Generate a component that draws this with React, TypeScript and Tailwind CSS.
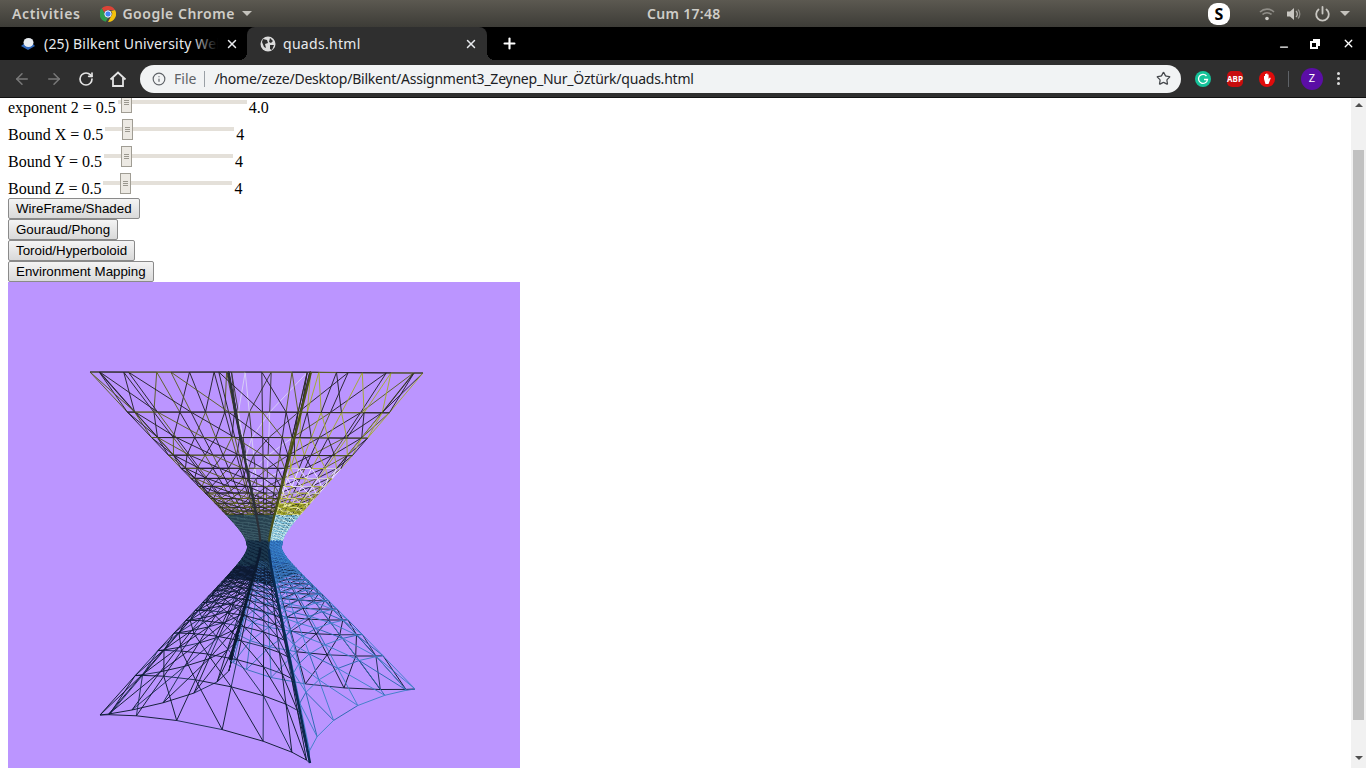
import React from "react";
import { ArrowLeft, ArrowRight, RotateCw, Info, Star, X, Plus, Minus } from "lucide-react";

// corners of the hyperboloid on screen, relative to the canvas corner
const corners = [
    { top: [415, 91], bot: [407, 407] },
    { top: [303, 90], bot: [302, 481] },
    { top: [82, 90], bot: [92, 433] },
    { top: [220, 90], bot: [222, 378] },
];

const cornerAt = (i: number, t: number) => {
    const c = corners[i];
    const o = corners[(i + 2) % 4];
    const T = t >= 0 ? c.top : c.bot;
    const O = t >= 0 ? o.top : o.bot;
    const cx = (T[0] + O[0]) / 2;
    const xw = 256.5;
    const a = 0.087;
    const abs = Math.abs(t);
    const r = Math.pow(abs * abs * (1 - a * a) + a * a, 0.46);
    return [xw + abs * (cx - xw) + r * (T[0] - cx), 263 + abs * (T[1] - 263)];
};

const meshPoint = (u: number, t: number) => {
    const p = [0, 1, 2, 3].map((i) => cornerAt(i, t));
    const cos = Math.cos(u);
    const sin = Math.sin(u);
    const cu = Math.sign(cos) * Math.pow(Math.abs(cos), 3);
    const su = Math.sign(sin) * Math.pow(Math.abs(sin), 3);
    const w = Math.abs(cu) / (Math.abs(cu) + Math.abs(su));
    return [0, 1].map((k) => {
        const ca = (p[0][k] + p[2][k]) / 2;
        const cb = (p[1][k] + p[3][k]) / 2;
        return w * ca + (1 - w) * cb + (cu * (p[0][k] - p[2][k])) / 2 + (su * (p[1][k] - p[3][k])) / 2;
    });
};

// q = quadrant, f = 0..1 inside it, ring = horizontal line
const wireColor = (q: number, f: number, t: number, seed: number, ring: boolean) => {
    const bright = q === 0;
    const pale = q === 3 && f < 0.5;
    if (t < -0.12) {
        if (bright) return seed % 3 === 0 ? "#2a68b0" : "#3f7fc8";
        if (pale) return "#3a74b8";
        return seed % 4 === 0 ? "#1c2f55" : "#0e1a33";
    }
    if (t < 0.03) {
        if (bright) return seed % 2 === 0 ? "#2a68ba" : "#3a84cf";
        return seed % 2 === 0 ? "#0e2238" : "#1d3a50";
    }
    if (t < 0.17) {
        if (bright) return seed % 3 === 0 ? "#d4f4f6" : "#86cbe6";
        return seed % 3 === 0 ? "#3f5f6a" : "#27404f";
    }
    if (t < 0.29) {
        if (bright) return seed % 3 === 0 ? "#e8e8a0" : "#a9ad2c";
        return seed % 2 === 0 ? "#5d5f22" : "#2c2d24";
    }
    if (t < 0.46) {
        if (bright) return seed % 3 === 0 ? "#bfc04a" : "#efeaff";
        if (pale) return seed % 2 === 0 ? "#d9d4fb" : "#4c4a58";
        return seed % 3 === 0 ? "#55581f" : "#211f2a";
    }
    if (ring) return seed % 3 === 0 ? "#5a5f22" : "#2b2a26";
    if (bright) return seed % 3 === 0 ? "#26242c" : "#a3ad2c";
    if (pale) return seed % 2 === 0 ? "#d8d0f6" : "#3a3a38";
    return seed % 3 === 0 ? "#5a5f22" : "#25232c";
};

const buildMesh = () => {
    const rings = 56;
    const longs = 32;
    const fills = new Map<string, string>();
    const groups = new Map<string, string>();
    const vMax = 1.4;
    const tOf = (i: number) => Math.tan(-vMax + (i * 2 * vMax) / rings) / Math.tan(vMax);
    const uOf = (j: number) => (j * Math.PI * 2) / longs;
    const txt = (p: number[]) => p[0].toFixed(1) + " " + p[1].toFixed(1);
    const add = (layer: number, color: string, a: number[], b: number[]) => {
        const key = layer + "|" + color;
        groups.set(key, (groups.get(key) || "") + "M" + txt(a) + "L" + txt(b));
    };
    for (let i = 0; i <= rings; i++) {
        for (let j = 0; j < longs; j++) {
            const q = Math.floor(j / 8);
            const f = (j % 8) / 8;
            const layer = q >= 2 ? 0 : 1;
            const t = tOf(i);
            const p = meshPoint(uOf(j), t);
            const p2 = meshPoint(uOf(j + 1), t);
            const seed = i * 7 + j * 13;
            add(layer, wireColor(q, f, t, seed, true), p, p2);
            if (i < rings) {
                const t2 = tOf(i + 1);
                const mid = (t + t2) / 2;
                const b = meshPoint(uOf(j), t2);
                const b2 = meshPoint(uOf(j + 1), t2);
                add(layer, wireColor(q, f, mid, seed + 1, false), p, b);
                add(layer, wireColor(q, f, mid, seed + 2, false), p, b2);
                if (mid > -0.2 && mid < (q === 0 ? 0.24 : 0.18)) {
                    const key = layer + "|" + wireColor(q, f, mid, seed + 2, false);
                    fills.set(key, (fills.get(key) || "") + "M" + txt(p) + "L" + txt(p2) + "L" + txt(b2) + "L" + txt(b) + "Z");
                }
            }
        }
    }
    const sorted = (m: Map<string, string>) =>
        Array.from(m.entries())
            .sort((a, b) => a[0].charCodeAt(0) - b[0].charCodeAt(0))
            .map(([key, d]) => ({ color: key.split("|")[1], d }));
    return { fills: sorted(fills), wires: sorted(groups) };
};

const mesh = buildMesh();

const seamPath = (j: number, from: number, to: number) => {
    const pts: string[] = [];
    for (let s = 0; s <= 60; s++) {
        const p = meshPoint((j * Math.PI) / 2, from + ((to - from) * s) / 60);
        pts.push(p[0].toFixed(1) + " " + p[1].toFixed(1));
    }
    return "M" + pts.join("L");
};

const Hyperboloid = () => (
    <svg viewBox="0 0 512 512" className="w-[512px] h-[512px] block" fill="none">
        {mesh.fills.map((m, i) => (
            <path key={i} d={m.d} fill={m.color} />
        ))}
        {mesh.wires.map((m, i) => (
            <path key={i} d={m.d} stroke={m.color} strokeWidth="0.95" />
        ))}
        <path d={seamPath(3, 0.02, 1)} stroke="#2b3038" strokeWidth="2.2" />
        <path d={seamPath(3, -0.02, -1)} stroke="#0c1a30" strokeWidth="2.6" />
        <path d={seamPath(1, 0.02, 1)} stroke="#4a5018" strokeWidth="2.2" />
        <path d={seamPath(1, -0.02, -1)} stroke="#0a2a50" strokeWidth="2.4" />
    </svg>
);

const ChromeLogo = () => (
    <svg width="16" height="16" viewBox="0 0 16 16">
        <path d="M8 0a8 8 0 0 1 7 4H8a4 4 0 0 0-3.700 2.400L1.700 2.300A8 8 0 0 1 8 0z" fill="#db4437" />
        <path d="M1.700 2.300l3 5.200A3.400 3.400 0 0 0 8 12l-2.200 3.700A8 8 0 0 1 1.700 2.300z" fill="#2e9c4e" />
        <path d="M15 4a8 8 0 0 1-7 12l3.200-6A3.600 3.600 0 0 0 11 5z" fill="#f4c20d" />
        <circle cx="8" cy="8" r="3.200" fill="#4285f4" stroke="#fff" strokeWidth="1" />
    </svg>
);

const Slider = ({ offset }: { offset: number }) => (
    <div className="relative w-[129px] h-[21px] shrink-0 mx-[2px]">
        <div className="absolute left-0 right-0 top-[8px] h-[4px] bg-[#e4e0d9]" />
        <div
            className="absolute top-0 w-[11px] h-[21px] bg-[#ece9e3] border border-[#a09d94] flex flex-col items-center justify-center gap-[1px]"
            style={{ left: offset }}>
            <span className="w-[5px] h-px bg-[#9a978e]" />
            <span className="w-[5px] h-px bg-[#9a978e]" />
            <span className="w-[5px] h-px bg-[#9a978e]" />
        </div>
    </div>
);

const SliderRow = ({ label, value, height, offset }: { label: string; value: string; height: string; offset: number }) => (
    <div className={"flex items-start text-black " + height}>
        <span className="pt-[7px] leading-[18px] whitespace-nowrap">{label}</span>
        <Slider offset={offset} />
        <span className="pt-[7px] leading-[18px]">{value}</span>
    </div>
);

const PageButton = ({ label, width }: { label: string; width: string }) => (
    <button
        className={
            "block h-[21px] px-[7px] text-left text-[13.33px] leading-none text-black whitespace-nowrap rounded-[2px] border border-[#8a8a8a] bg-gradient-to-b from-[#f4f4f4] to-[#d9d9d9] font-['Liberation_Sans',sans-serif] " +
            width
        }>
        {label}
    </button>
);

const App: React.FC = () => {
    return (
        <div className="w-[1366px] h-[768px] flex flex-col overflow-hidden bg-white font-['Noto_Sans',sans-serif]">
            {/* ubuntu top bar */}
            <div className="h-[27px] shrink-0 flex items-center pl-[12px] pr-[16px] bg-gradient-to-b from-[#5c5951] to-[#3d3c37] text-[14px] font-semibold text-[#cfcdc8] relative">
                <span className="tracking-[0.6px]">Activities</span>
                <div className="flex items-center ml-[20px] gap-[6px]">
                    <ChromeLogo />
                    <span className="tracking-[0.5px]">Google Chrome</span>
                    <span className="w-0 h-0 ml-[1px] border-x-[5px] border-x-transparent border-t-[5px] border-t-[#c4c2bc]" />
                </div>
                <span className="absolute left-[647px] tracking-[0.3px]">Cum 17:48</span>
                <div className="ml-auto flex items-center">
                    <div className="w-[22px] h-[22px] rounded-[9px] bg-white text-black text-[16px] font-bold flex items-center justify-center mr-[29px]">
                        S
                    </div>
                    <svg width="16" height="14" viewBox="0 0 16 14" className="mr-[12px]" fill="none" stroke="#8f8d87" strokeWidth="1.600">
                        <path d="M1 5a10 10 0 0 1 14 0" />
                        <path d="M3.500 7.500a6.500 6.500 0 0 1 9 0" />
                        <circle cx="8" cy="11.500" r="1.800" fill="#d0cec9" stroke="none" />
                    </svg>
                    <svg width="16" height="14" viewBox="0 0 16 14" className="mr-[12px]" fill="none">
                        <path d="M0 4.500h3L7 1v12L3 9.500H0z" fill="#c9c7c2" />
                        <path d="M9 4a4 4 0 0 1 0 6" stroke="#b5b3ae" strokeWidth="1.300" />
                        <path d="M11 2.500a6.500 6.500 0 0 1 0 9" stroke="#8f8d87" strokeWidth="1.300" />
                    </svg>
                    <svg width="15" height="16" viewBox="0 0 15 16" className="mr-[10px]" fill="none" stroke="#c9c7c2" strokeWidth="1.800" strokeLinecap="round">
                        <path d="M7.500 1v6.500" />
                        <path d="M3.500 3.500a6.300 6.300 0 1 0 8 0" />
                    </svg>
                    <span className="w-0 h-0 border-x-[5px] border-x-transparent border-t-[5px] border-t-[#c4c2bc]" />
                </div>
            </div>

            {/* tab strip */}
            <div className="h-[33px] shrink-0 bg-black flex items-stretch text-[14px] text-[#e8eaed]">
                <div className="w-[247px] flex items-center pl-[20px] relative shrink-0">
                    <svg width="16" height="14" viewBox="0 0 16 14" className="shrink-0">
                        <path d="M1 9l4-3h7l3 3-7 4z" fill="#2f66b8" />
                        <ellipse cx="8.500" cy="5.500" rx="5" ry="4.500" fill="#e9edf2" />
                    </svg>
                    <span className="ml-[8px] whitespace-nowrap w-[174px] overflow-hidden tracking-[0.2px]">(25) Bilkent University Web</span>
                    <div className="absolute left-[192px] w-[26px] h-full bg-gradient-to-r from-transparent to-black" />
                    <X size={14} className="absolute left-[225px] text-[#e8eaed]" strokeWidth={2.5} />
                </div>
                <div className="w-[240px] shrink-0 bg-[#2f2f2f] rounded-t-[8px] flex items-center pl-[13px] relative">
                    <span className="absolute -left-[8px] bottom-0 w-[8px] h-[8px] bg-[radial-gradient(circle_at_0_0,#000_8px,#2f2f2f_8px)]" />
                    <span className="absolute -right-[8px] bottom-0 w-[8px] h-[8px] bg-[radial-gradient(circle_at_100%_0,#000_8px,#2f2f2f_8px)]" />
                    <svg width="16" height="16" viewBox="0 0 16 16">
                        <circle cx="8" cy="8" r="7.500" fill="#dcdcdc" />
                        <path d="M3 3l4 1 1 3-3 1 1 4-2-1-2-5zM10 2l3 3-2 2-2-1zM10 9l4 0-2 5-2-1z" fill="#2f2f2f" />
                    </svg>
                    <span className="ml-[7px] tracking-[0.3px]">quads.html</span>
                    <X size={14} className="absolute left-[217px] text-[#e8eaed]" strokeWidth={2.5} />
                </div>
                <div className="flex items-center ml-[14px]">
                    <Plus size={17} className="text-white" strokeWidth={3} />
                </div>
                <div className="ml-auto flex items-center pr-[11px] text-white">
                    <Minus size={12} strokeWidth={2.5} className="mt-[6px] mr-[20px]" />
                    <svg width="10" height="10" viewBox="0 0 10 10" className="mr-[22px]" fill="none" stroke="#fff" strokeWidth="2">
                        <path d="M3 1h6v6" />
                        <rect x="1" y="3" width="6" height="6" />
                    </svg>
                    <X size={13} strokeWidth={2.5} />
                </div>
            </div>

            {/* toolbar */}
            <div className="h-[38px] shrink-0 bg-[#2f2f2f] border-b border-[#111] flex items-center">
                <ArrowLeft size={18} className="ml-[13px] text-[#797979]" strokeWidth={2} />
                <ArrowRight size={18} className="ml-[14px] text-[#797979]" strokeWidth={2} />
                <RotateCw size={16} className="ml-[15px] text-[#e4e4e4]" strokeWidth={2.5} />
                <svg width="18" height="18" viewBox="0 0 18 18" className="ml-[15px]" fill="none" stroke="#e4e4e4" strokeWidth="1.800">
                    <path d="M1.500 9.500L9 2.500l7.500 7" />
                    <path d="M4 8v8h10V8" />
                </svg>
                <div className="ml-[13px] w-[1041px] h-[28px] rounded-full bg-[#f1f3f4] flex items-center pl-[12px] pr-[10px] text-[14px]">
                    <Info size={14} className="text-[#5f6368]" strokeWidth={2} />
                    <span className="ml-[8px] text-[#5f6368]">File</span>
                    <span className="w-px h-[16px] bg-[#9aa0a6] ml-[8px]" />
                    <span className="ml-[9px] text-[#202124] whitespace-nowrap tracking-[-0.23px]">
                        /home/zeze/Desktop/Bilkent/Assignment3_Zeynep_Nur_Öztürk/quads.html
                    </span>
                    <Star size={15} className="ml-auto text-[#45484c]" strokeWidth={2} />
                </div>
                <div className="ml-[14px] w-[16px] h-[16px] rounded-full bg-[#15c39a] flex items-center justify-center">
                    <svg width="12" height="12" viewBox="0 0 12 12" fill="none" stroke="#fff" strokeWidth="1.300">
                        <path d="M9.500 3a4.500 4.500 0 1 0 1 3.500H7" />
                    </svg>
                </div>
                <div className="ml-[16px] w-[16px] h-[16px] rounded-[5px] bg-[#c80d0d] text-white text-[8px] font-bold leading-none flex items-center justify-center">
                    ABP
                </div>
                <div className="ml-[16px] w-[16px] h-[16px] rounded-full bg-[#e00b0b] flex items-center justify-center">
                    <svg width="10" height="12" viewBox="0 0 10 12">
                        <path d="M2 6V3h1v2-4h1.200v4-4.500h1.200V5V1.500h1.200V6l1.200-1.500 1 .5L6.500 11H3.500z" fill="#fff" />
                    </svg>
                </div>
                <span className="ml-[13px] w-px h-[16px] bg-[#5f6368]" />
                <div className="ml-[12px] w-[22px] h-[22px] rounded-full bg-[#5b0ea6] text-white text-[11px] flex items-center justify-center">
                    Z
                </div>
                <div className="ml-[14px] flex flex-col gap-[2px]">
                    <span className="w-[3px] h-[3px] rounded-full bg-[#dcdcdc]" />
                    <span className="w-[3px] h-[3px] rounded-full bg-[#dcdcdc]" />
                    <span className="w-[3px] h-[3px] rounded-full bg-[#dcdcdc]" />
                </div>
            </div>

            {/* page */}
            <div className="flex-1 min-h-0 flex">
                <div className="flex-1 min-w-0 overflow-hidden pl-[8px] font-['Liberation_Serif',serif] text-[16px]">
                    <div className="-mt-[6px]">
                        <SliderRow label="exponent 2 = 0.5" value="4.0" height="h-[27px]" offset={3} />
                        <SliderRow label="Bound X = 0.5" value="4" height="h-[27px]" offset={17} />
                        <SliderRow label="Bound Y = 0.5" value="4" height="h-[27px]" offset={17} />
                        <SliderRow label="Bound Z = 0.5" value="4" height="h-[25px]" offset={17} />
                        <PageButton label="WireFrame/Shaded" width="w-[132px]" />
                        <PageButton label="Gouraud/Phong" width="w-[110px]" />
                        <PageButton label="Toroid/Hyperboloid" width="w-[127px]" />
                        <PageButton label="Environment Mapping" width="w-[146px]" />
                        <div className="w-[512px] h-[512px] bg-[#bb95ff]">
                            <Hyperboloid />
                        </div>
                    </div>
                </div>
                <div className="w-[15px] shrink-0 bg-[#f1f1f1] flex flex-col items-center">
                    <span className="mt-[5px] w-0 h-0 border-x-[4px] border-x-transparent border-b-[4px] border-b-[#505050]" />
                    <div className="mt-[43px] w-[11px] h-[570px] bg-[#c1c1c1]" />
                    <span className="mt-[36px] w-0 h-0 border-x-[4px] border-x-transparent border-t-[4px] border-t-[#505050]" />
                </div>
            </div>
        </div>
    );
};

export default App;
